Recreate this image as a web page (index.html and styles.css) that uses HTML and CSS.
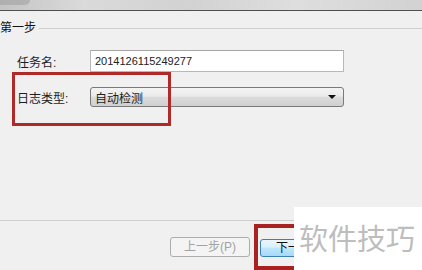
FILE: index.html
```html
<!DOCTYPE html>
<html lang="zh-CN">
<head>
    <meta charset="UTF-8">
    <title>第一步</title>
    <link rel="stylesheet" href="styles.css">
</head>
<body>
    <div class="titlebar"><span class="blob"></span></div>
    <fieldset class="group">
        <legend>第一步</legend>
        <div class="row row-name">
            <label>任务名:</label>
            <input class="field" type="text" value="2014126115249277">
        </div>
        <div class="row row-type">
            <label>日志类型:</label>
            <div class="select">
                <span>自动检测</span>
                <i class="arrow"></i>
            </div>
        </div>
    </fieldset>
    <div class="buttons">
        <button class="btn disabled">上一步(<u>P</u>)</button>
        <div class="clip">
            <button class="btn primary">下一</button>
        </div>
    </div>

    <!-- 标注 -->
    <div class="mark mark-type"></div>
    <div class="mark mark-next"></div>
    <div class="watermark">软件技巧</div>
</body>
</html>
```

FILE: styles.css
```css
* {
    padding: 0;
    margin: 0;
    box-sizing: border-box;
}
html, body {
    width: 422px;
    height: 270px;
    overflow: hidden;
}
body {
    position: relative;
    display: flex;
    flex-direction: column;
    background: #f0f0f0;
    font-family: "Liberation Sans", "Noto Sans CJK SC", sans-serif;
    font-size: 12px;
    color: #1e1e1e;
}
.titlebar {
    position: relative;
    height: 11px;
    background: linear-gradient(90deg, #c4c4c4 0%, #dadada 20%, #d2d2d2 45%, #dedede 70%, #d2d2d2 100%);
    border-bottom: 1px solid #4f4f4f;
}
.blob {
    position: absolute;
    left: 0;
    top: 0;
    width: 30px;
    height: 5px;
    background: #9a9a9a;
    border-radius: 0 0 10px 0;
    opacity: .5;
}
.group {
    margin: 9px 0 0 -2px;
    height: 201px;
    border: none;
    border-top: 1px solid #cfcfcf;
    border-bottom: 1px solid #cfcfcf;
    padding: 0 0 0 19px;
}
.group legend {
    margin-left: -17px;
    padding: 0 3px 0 0;
    line-height: 16px;
    font-size: 12px;
    color: #111;
}
.row {
    display: flex;
    align-items: center;
}
.row label {
    width: 73px;
}
.row-name {
    margin-top: 14px;
}
.row-type {
    margin-top: 15px;
}
.field {
    width: 254px;
    height: 22px;
    padding: 0 0 0 4px;
    border: 1px solid #b8b8b8;
    border-top-color: #a6a6a6;
    background: #fff;
    font-family: "Liberation Sans", sans-serif;
    font-size: 11px;
    color: #222;
    outline: none;
}
.select {
    position: relative;
    display: flex;
    align-items: center;
    width: 254px;
    height: 20px;
    padding-left: 4px;
    border: 1px solid #7a7a7a;
    border-radius: 3px;
    background: linear-gradient(#f3f3f3 0%, #ebebeb 45%, #dcdcdc 50%, #cfcfcf 100%);
}
.arrow {
    position: absolute;
    right: 7px;
    top: 7px;
    border-left: 4px solid transparent;
    border-right: 4px solid transparent;
    border-top: 4px solid #111;
}
.buttons {
    display: flex;
    gap: 10px;
    padding: 16px 0 0 170px;
}
.btn {
    width: 80px;
    height: 20px;
    border-radius: 3px;
    font-family: "Liberation Sans", "Noto Sans CJK SC", sans-serif;
    font-size: 12px;
    line-height: 16px;
}
.btn u {
    text-decoration: none;
}
.disabled {
    border: 1px solid #adadad;
    background: #f4f4f4;
    color: #a3a3a3;
}
.clip {
    width: 34px;
    height: 22px;
    overflow: hidden;
}
.primary {
    height: 18px;
    margin-top: 2px;
    border: 1px solid #3c7fb1;
    background: linear-gradient(#eaf6fd 0%, #d9f0fc 45%, #bee6fd 50%, #a7d9f5 100%);
    color: #111;
    text-align: left;
    padding-left: 15px;
}
.mark {
    position: absolute;
    border: 3px solid #b02a2a;
}
.mark-type {
    left: 12px;
    top: 72px;
    width: 159px;
    height: 54px;
}
.mark-next {
    left: 254px;
    top: 224px;
    width: 50px;
    height: 46px;
    border-width: 4px;
    border-color: #a82222;
}
.watermark {
    position: absolute;
    left: 294px;
    top: 207px;
    width: 128px;
    height: 63px;
    background: #fff;
    padding: 13px 0 0 5px;
    font-family: "Noto Sans CJK SC", sans-serif;
    font-size: 29px;
    line-height: 34px;
    color: #bdbdbd;
}
```
